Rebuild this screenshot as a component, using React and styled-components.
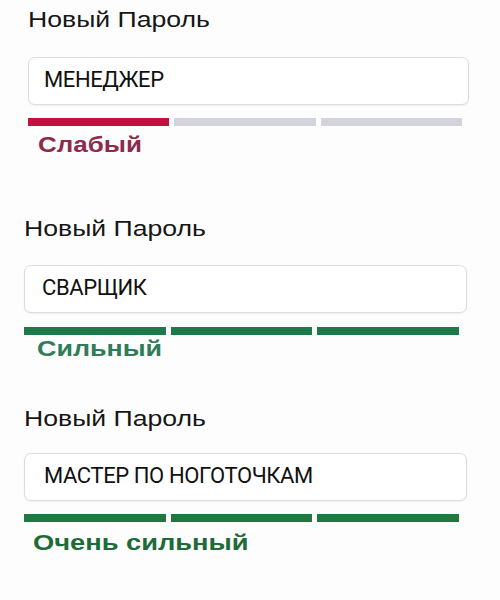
import React from "react";
import styled, { createGlobalStyle } from "styled-components";

const Global = createGlobalStyle`
  html, body { margin: 0; padding: 0; background: #fdfdfe; }
  body { width: 500px; height: 600px; overflow: hidden; }
`;

const Page = styled.div`
  display: flex;
  flex-direction: column;
  width: 500px;
`;

const Field = styled.section`
  display: flex;
  flex-direction: column;
  margin-top: ${(p) => p.$top}px;
  padding-left: ${(p) => p.$left}px;
  width: ${(p) => p.$width}px;
`;

const Label = styled.div`
  font-family: "Liberation Sans", Arial, sans-serif;
  font-size: 22px;
  line-height: 24px;
  color: #161616;
  margin-bottom: ${(p) => p.$gap}px;
`;

const Wide = styled.span`
  display: inline-block;
  transform: scaleX(${(p) => p.$k});
  transform-origin: left center;
  white-space: nowrap;
`;

const InputBox = styled.div`
  box-sizing: border-box;
  height: 48px;
  border: 1px solid #dcdcde;
  border-radius: 7px;
  background: #ffffff;
  box-shadow: 0 1px 2px rgba(0, 0, 0, 0.06);
  display: flex;
  align-items: center;
  padding: 0 0 3px ${(p) => p.$pad}px;
  font-family: Roboto, "Liberation Sans", sans-serif;
  font-size: 22px;
  letter-spacing: -0.4px;
  color: #111111;
  white-space: nowrap;
`;

const Meter = styled.div`
  display: grid;
  grid-template-columns: repeat(3, 1fr);
  column-gap: 5px;
  margin-top: ${(p) => p.$gap}px;
  margin-right: ${(p) => p.$inset}px;
`;

const Segment = styled.div`
  height: 8px;
  background: ${(p) => (p.$on ? p.$color : "#d3d3de")};
`;

const Strength = styled.div`
  font-family: "Liberation Sans", Arial, sans-serif;
  font-weight: 700;
  font-size: 22px;
  line-height: 25px;
  color: ${(p) => p.$color};
  margin-top: ${(p) => p.$gap}px;
  padding-left: ${(p) => p.$indent}px;
`;

const fields = [
  {
    value: "МЕНЕДЖЕР", pad: 15,
    top: 8, left: 28, width: 441, labelGap: 25, barGap: 13, textGap: 6, inset: 7,
    level: 1, bar: "#c3113f", text: "Слабый", textColor: "#8c2b4c", indent: 10, k: 1.18,
  },
  {
    value: "СВАРЩИК", pad: 17,
    top: 60, left: 24, width: 443, labelGap: 24, barGap: 14, textGap: 1, inset: 8,
    level: 3, bar: "#1f7a4b", text: "Сильный", textColor: "#2f7c59", indent: 13, k: 1.22,
  },
  {
    value: "МАСТЕР ПО НОГОТОЧКАМ", pad: 19,
    top: 46, left: 24, width: 443, labelGap: 22, barGap: 13, textGap: 8, inset: 8,
    level: 3, bar: "#1c7a40", text: "Очень сильный", textColor: "#1d6b36", indent: 9, k: 1.24,
  },
];

export default function App() {
  return (
    <>
      <Global />
      <Page>
        {fields.map((f, i) => (
          <Field key={i} $top={f.top} $left={f.left} $width={f.width}>
            <Label $gap={f.labelGap}>
              <Wide $k={1.21}>Новый Пароль</Wide>
            </Label>
            <InputBox $pad={f.pad}>{f.value}</InputBox>
            <Meter $gap={f.barGap} $inset={f.inset}>
              {[0, 1, 2].map((s) => (
                <Segment key={s} $on={s < f.level} $color={f.bar} />
              ))}
            </Meter>
            <Strength $gap={f.textGap} $color={f.textColor} $indent={f.indent}>
              <Wide $k={f.k}>{f.text}</Wide>
            </Strength>
          </Field>
        ))}
      </Page>
    </>
  );
}
